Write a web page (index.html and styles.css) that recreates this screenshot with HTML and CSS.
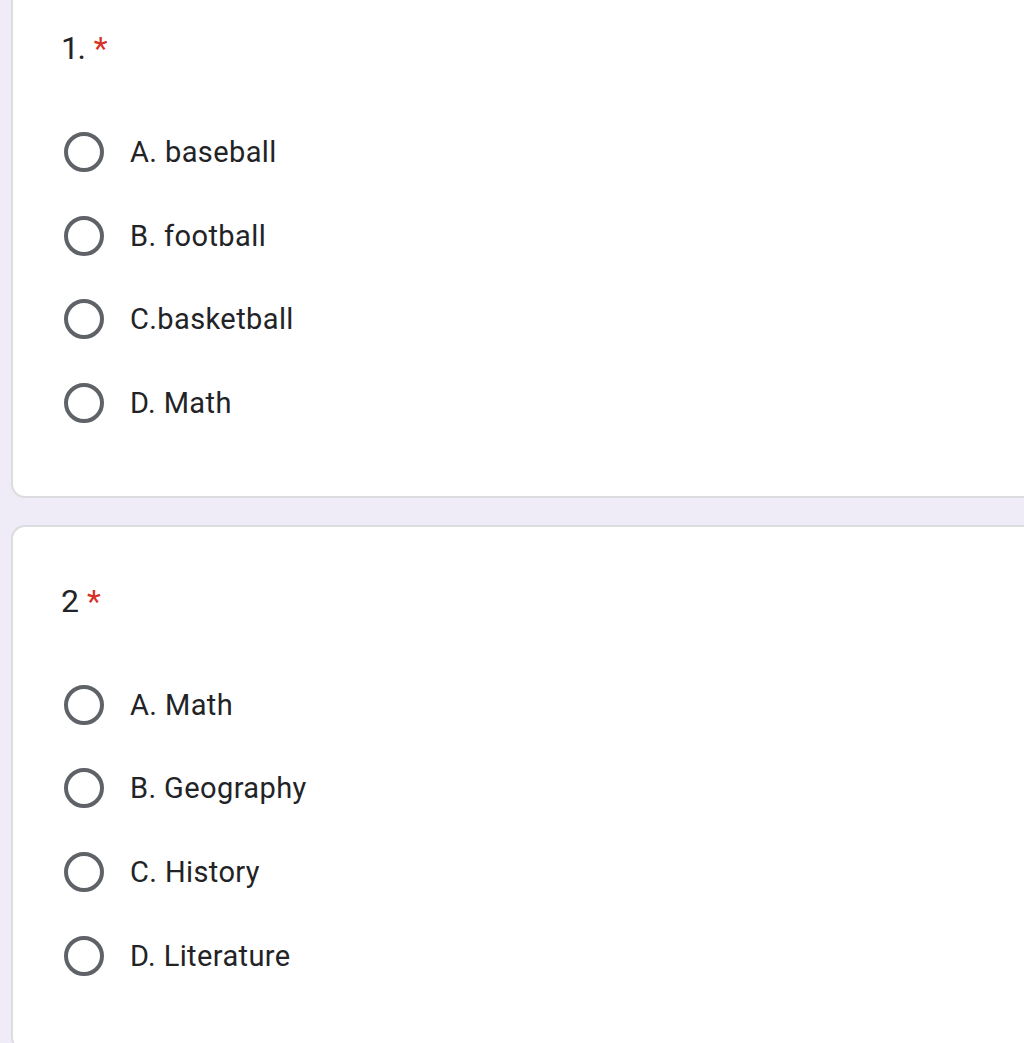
FILE: index.html
```html
<!DOCTYPE html>
<html lang="en">
<head>
    <meta charset="UTF-8">
    <meta name="viewport" content="width=device-width, initial-scale=1.0">
    <title>Quiz</title>
    <link rel="stylesheet" href="styles.css">
</head>
<body>
    <main class="form">
        <!-- Question 1 -->
        <section class="question-card">
            <div class="question-title">1. <span class="required">*</span></div>
            <div class="options">
                <label class="option"><span class="radio"></span><span class="option-label">A. baseball</span></label>
                <label class="option"><span class="radio"></span><span class="option-label">B. football</span></label>
                <label class="option"><span class="radio"></span><span class="option-label">C.basketball</span></label>
                <label class="option"><span class="radio"></span><span class="option-label">D. Math</span></label>
            </div>
        </section>

        <!-- Question 2 -->
        <section class="question-card">
            <div class="question-title">2 <span class="required">*</span></div>
            <div class="options">
                <label class="option"><span class="radio"></span><span class="option-label">A. Math</span></label>
                <label class="option"><span class="radio"></span><span class="option-label">B. Geography</span></label>
                <label class="option"><span class="radio"></span><span class="option-label">C. History</span></label>
                <label class="option"><span class="radio"></span><span class="option-label">D. Literature</span></label>
            </div>
        </section>
    </main>
</body>
</html>
```

FILE: styles.css
```css
html, body {
    margin: 0;
    padding: 0;
    background-color: #efebf7;
    font-family: Roboto, "Liberation Sans", sans-serif;
    color: #222326;
    overflow: hidden;
}

.form {
    display: flex;
    flex-direction: column;
    gap: 27px;
    margin-top: -28px;
    padding-left: 11px;
}

.question-card {
    background-color: #ffffff;
    border: 2px solid #dadce0;
    border-right: none;
    border-radius: 14px 0 0 14px;
    padding: 50px 0 51px 48px;
}

.question-title {
    font-size: 32px;
    line-height: 48px;
    letter-spacing: -1.5px;
}

.required {
    color: #d93025;
    margin-left: 3px;
}

.options {
    display: flex;
    flex-direction: column;
    margin-top: 38px;
}

.option {
    display: flex;
    align-items: center;
    height: 83.7px;
    cursor: pointer;
}

.radio {
    width: 40px;
    height: 40px;
    box-sizing: border-box;
    border: 4px solid #5f6368;
    border-radius: 50%;
    margin-left: 2.5px;
    flex-shrink: 0;
}

.option-label {
    margin-left: 26.5px;
    font-size: 29px;
    letter-spacing: 0.4px;
    line-height: 40px;
}
```
